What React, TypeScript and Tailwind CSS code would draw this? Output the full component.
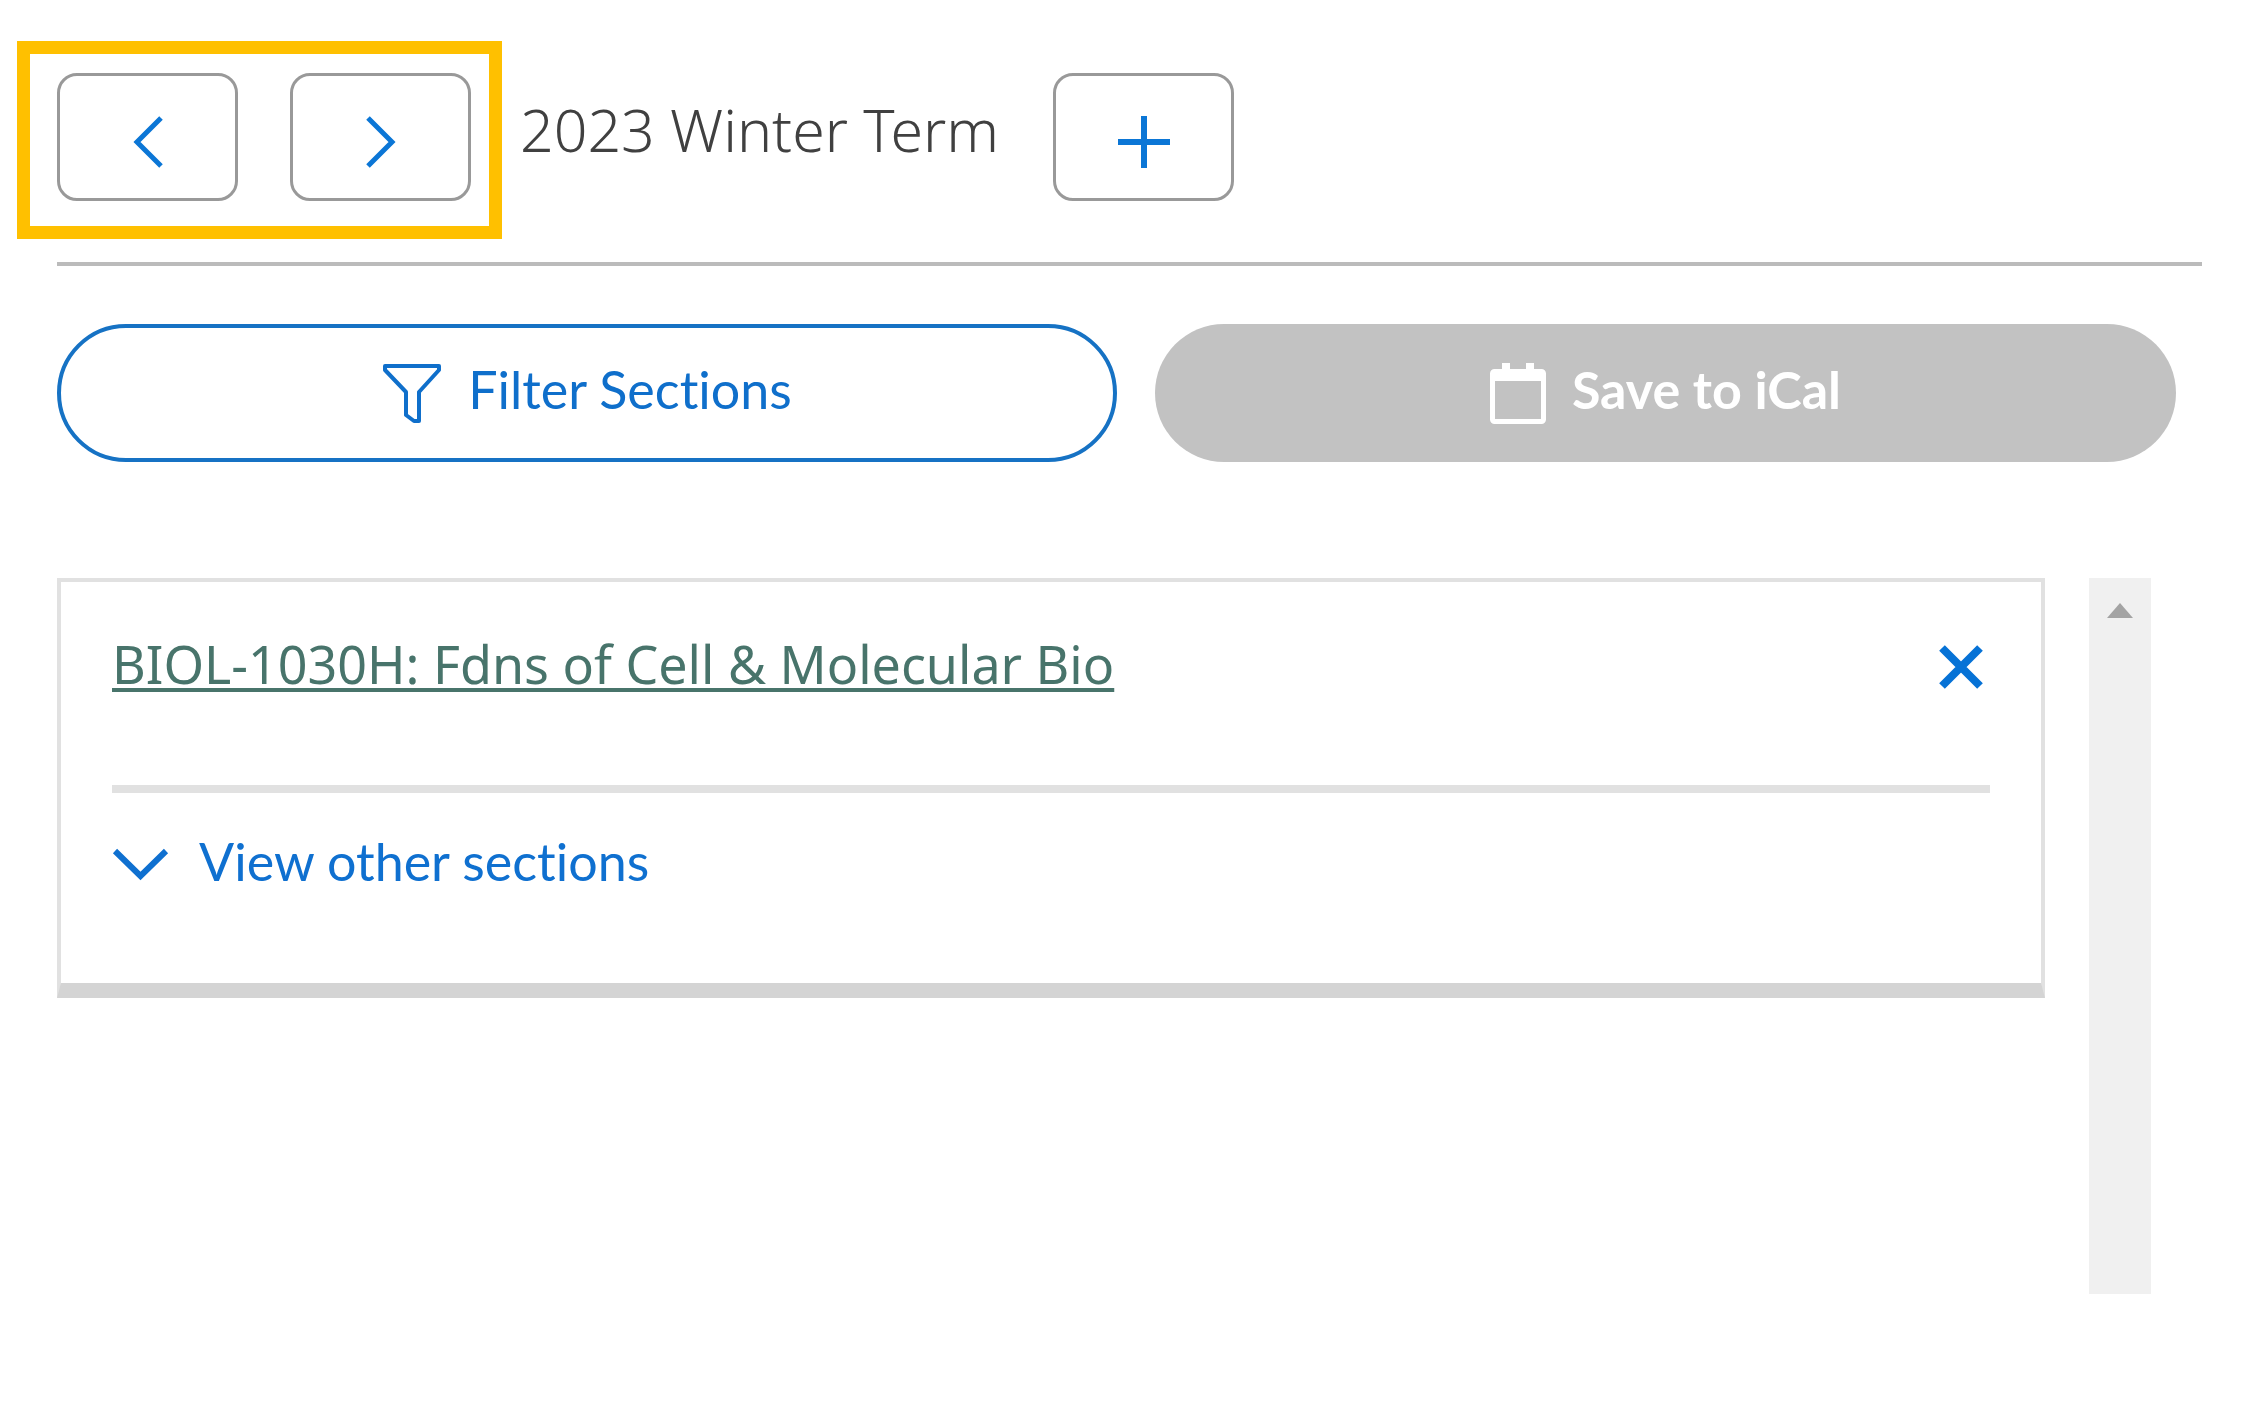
import React from 'react';

const IconPrev = () => (
  <svg className="h-[52px] w-[30px]" viewBox="0 0 30 52" fill="none" stroke="currentColor" strokeWidth="5" aria-hidden="true">
    <path d="M28 2 L4 26 L28 50" />
  </svg>
);

const IconNext = () => (
  <svg className="h-[52px] w-[30px]" viewBox="0 0 30 52" fill="none" stroke="currentColor" strokeWidth="5" aria-hidden="true">
    <path d="M2 2 L26 26 L2 50" />
  </svg>
);

const IconPlus = () => (
  <svg className="h-[52px] w-[52px]" viewBox="0 0 52 52" fill="none" stroke="currentColor" strokeWidth="6" aria-hidden="true">
    <path d="M26 0 V52 M0 26 H52" />
  </svg>
);

const IconFilter = () => (
  <svg className="h-[62px] w-[60px]" viewBox="0 0 60 62" fill="none" stroke="currentColor" strokeWidth="4" strokeLinejoin="round" aria-hidden="true">
    <path d="M3 4 H57 V8 L37 30 V59 H32 L24 53 V30 L3 8 Z" />
  </svg>
);

const IconCalendar = () => (
  <svg className="h-[62px] w-[56px]" viewBox="0 0 56 62" fill="none" stroke="currentColor" aria-hidden="true">
    <rect x="2.5" y="9.5" width="51" height="50" rx="2" strokeWidth="5" />
    <path d="M2 14 H54" strokeWidth="10" />
    <path d="M16 1 V12 M40 1 V12" strokeWidth="8" />
  </svg>
);

const IconClose = () => (
  <svg className="h-[46px] w-[46px]" viewBox="0 0 46 46" fill="none" stroke="currentColor" strokeWidth="8" aria-hidden="true">
    <path d="M4 4 L42 42 M42 4 L4 42" />
  </svg>
);

const IconExpand = () => (
  <svg className="h-[34px] w-[57px]" viewBox="0 0 57 34" fill="none" stroke="currentColor" strokeWidth="6" aria-hidden="true">
    <path d="M3 3 L28.5 28 L54 3" />
  </svg>
);

interface SquareButtonProps {
  label: string;
  children: React.ReactNode;
}

const SquareButton = ({ label, children }: SquareButtonProps) => (
  <button
    type="button"
    aria-label={label}
    className="flex h-32 w-[181px] shrink-0 items-center justify-center rounded-[20px] border-[3px] border-[#999] bg-white pt-2.5 text-[#0b76d6]"
  >
    {children}
  </button>
);

const TermBar = () => (
  <header className="flex items-start pl-[17px]">
    <div className="flex shrink-0 gap-[52px] border-[13px] border-[#ffc000] pt-[19px] pr-[18px] pb-[25px] pl-[27px]">
      <SquareButton label="Previous term">
        <IconPrev />
      </SquareButton>
      <SquareButton label="Next term">
        <IconNext />
      </SquareButton>
    </div>
    <div className="flex items-start gap-[54px] pt-8 pl-[18px]">
      <h1 className="pt-[18px] font-['Noto_Sans',sans-serif] text-[59px] leading-[76px] font-[350] whitespace-nowrap text-[#404040]">
        2023 Winter Term
      </h1>
      <SquareButton label="Add term">
        <IconPlus />
      </SquareButton>
    </div>
  </header>
);

const Actions = () => (
  <div className="flex gap-[38px] pt-[58px] pr-[66px] pl-[57px] text-[52px] leading-[64px] [font-variant-ligatures:none]">
    <button
      type="button"
      className="flex h-[138px] flex-[1056] items-center justify-center gap-[26px] rounded-full border-4 border-[#1672c4] bg-white text-[#0f6fcb]"
    >
      <IconFilter />
      <span className="pb-2">Filter Sections</span>
    </button>
    <button
      type="button"
      disabled
      className="flex h-[138px] flex-[1025] items-center justify-center gap-[26px] rounded-full bg-[#c2c2c2] font-bold text-white"
    >
      <IconCalendar />
      <span className="pb-2">Save to iCal</span>
    </button>
  </div>
);

const CourseCard = () => (
  <article className="min-w-0 flex-1 self-start border-4 border-b-[15px] border-[#e1e1e1] border-b-[#d4d4d4] px-[51px] pb-[90px]">
    <div className="flex items-start justify-between border-b-8 border-[#e1e1e1] pt-[46px] pb-[86px]">
      <a
        href="#course"
        className="font-['Noto_Sans',sans-serif] text-[52px] leading-[71px] text-[#48746b] underline decoration-4 underline-offset-4 [text-decoration-skip-ink:none]"
      >
        BIOL-1030H: Fdns of Cell &amp; Molecular Bio
      </a>
      <button type="button" aria-label="Remove course" className="pt-4 pr-1.5 text-[#0672d6]">
        <IconClose />
      </button>
    </div>
    <button
      type="button"
      className="mt-9 flex items-center gap-[30px] text-[52px] leading-[64px] text-[#0f70d0] [font-variant-ligatures:none]"
    >
      <span className="pt-2">
        <IconExpand />
      </span>
      View other sections
    </button>
  </article>
);

const App = () => {
  return (
    <main className="min-h-screen bg-white pt-[41px] font-['Lato',sans-serif]">
      <TermBar />
      <hr className="mt-[23px] mr-10 ml-[57px] border-t-4 border-[#bbb]" />
      <Actions />
      <section className="flex gap-11 pt-[116px] pr-[91px] pl-[57px]">
        <CourseCard />
        <div className="flex h-[716px] w-[62px] shrink-0 justify-center bg-[#f0f0f0] pt-[25px]">
          <svg className="h-[15px] w-[26px]" viewBox="0 0 26 15" fill="#a3a3a3" aria-hidden="true">
            <path d="M13 0 L26 15 H0 Z" />
          </svg>
        </div>
      </section>
    </main>
  );
};

export default App;
